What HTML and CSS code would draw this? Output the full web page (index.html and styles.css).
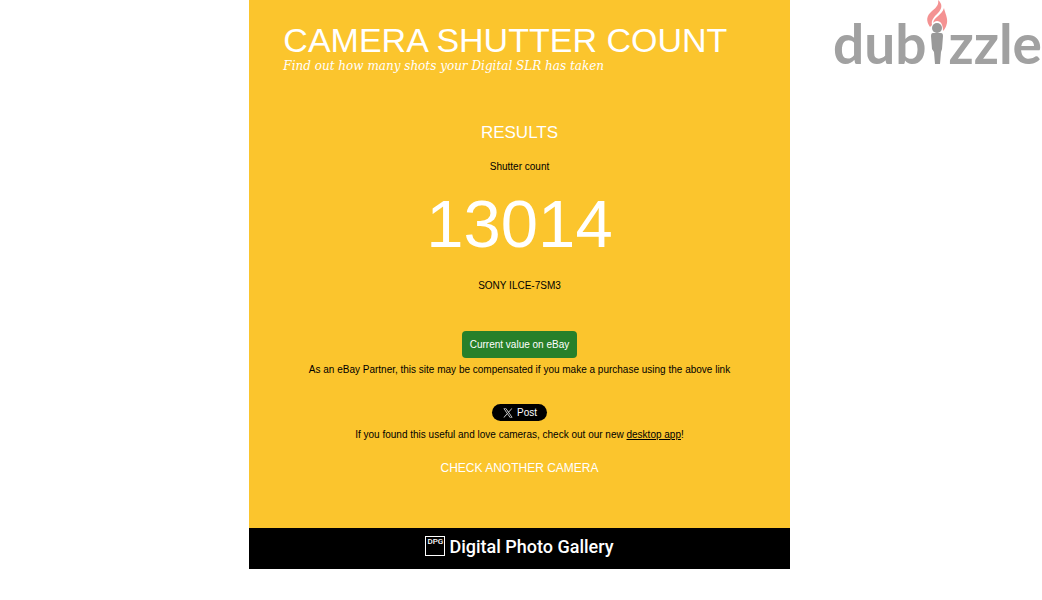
FILE: index.html
```html
<!DOCTYPE html>
<html lang="en">
<head>
  <meta charset="UTF-8">
  <title>Camera Shutter Count</title>
  <link rel="stylesheet" href="styles.css">
</head>
<body>

<!-- Main page column -->
<div class="page">
  <main class="content">
    <header class="header">
      <h1>CAMERA SHUTTER COUNT</h1>
      <p class="tagline">Find out how many shots your Digital SLR has taken</p>
    </header>

    <!-- Result of the upload -->
    <section class="results">
      <h2>RESULTS</h2>
      <p>Shutter count</p>
      <p class="count">13014</p>
      <p>SONY ILCE-7SM3</p>
    </section>

    <section class="links">
      <a class="ebay" href="#">Current value on eBay</a>
      <p>As an eBay Partner, this site may be compensated if you make a purchase using the above link</p>
      <button class="post" type="button">
        <svg class="x-icon" viewBox="0 0 24 24" aria-hidden="true">
          <path d="M14.1 10.3 22.3 1H20.4L13.2 9.1 7.6 1H1L9.6 13.3 1 23H2.9L10.5 14.4 16.4 23H23zM3.7 2.4H6.7L20.4 21.6H17.4z"/>
        </svg>
        Post
      </button>
      <p>If you found this useful and love cameras, check out our new <a href="#">desktop app</a>!</p>
      <a class="again" href="#">CHECK ANOTHER CAMERA</a>
    </section>
  </main>

  <footer class="footer">
    <span class="badge">DPG</span>
    <span class="gallery">Digital Photo Gallery</span>
  </footer>
</div>

<!-- Site watermark -->
<div class="watermark">
  <span>dub</span>
  <svg class="torch" viewBox="0 0 22 66" aria-hidden="true">
    <path class="flame" d="M4 27C0 21 0 16 6 11C11 7 13 4 12 0C17 4 16 9 12 13C8 17 5 20 6 25zM7 23C8 17 16 15 18 8C19 13 22 18 21 23C20 27 19 29 17 31C17 25 15 21 11 21C9 21 8 22 7 23z"/>
    <circle class="body" cx="11" cy="28" r="5"/>
    <path class="body" d="M7 33H15Q17 33 17 36L16 49L15 52L14 64H9L8 52L6 49L5 36Q5 33 7 33z"/>
  </svg>
  <span>zzle</span>
</div>

</body>
</html>
```
FILE: styles.css
```css
/* Whole page */
body {
  margin: 0;
  padding-right: 3px;
  background: #fff;
  color: #000;
  font-family: "Liberation Sans", Arial, sans-serif;
  font-size: 10px;
  line-height: 12px;
}

h1, h2, p {
  margin: 0;
  font-weight: normal;
}

/* Centered column */
.page {
  width: 52%;
  margin: 0 auto;
}

.content {
  background: #fbc52d;
  padding: 22px 34px 52px;
}

h1 {
  color: #fff;
  font-size: 34px;
  line-height: 36px;
}

.tagline {
  color: #fff;
  font-family: "DejaVu Serif", Georgia, serif;
  font-style: italic;
  font-size: 12px;
  line-height: 16px;
}

/* Results */
.results {
  display: flex;
  flex-direction: column;
  align-items: center;
  margin-top: 48px;
}

h2 {
  color: #fff;
  font-size: 17px;
  line-height: 22px;
  margin-bottom: 17px;
}

.count {
  color: #fff;
  font-size: 67px;
  line-height: 76px;
  margin: 13px 0 18px;
}

/* Links under the result */
.links {
  display: flex;
  flex-direction: column;
  align-items: center;
  margin-top: 39px;
  text-align: center;
}

.links a {
  color: #000;
}

.links .ebay {
  background: #27802a;
  color: #fff;
  border-radius: 4px;
  padding: 8px;
  line-height: 11px;
  margin-bottom: 6px;
  text-decoration: none;
}

.post {
  display: flex;
  align-items: center;
  gap: 4px;
  margin: 28px 0 8px;
  padding: 2px 10px 2px 11px;
  border: none;
  border-radius: 9px;
  background: #000;
  color: #fff;
  font-family: inherit;
  font-size: 10px;
  line-height: 13px;
}

.x-icon {
  width: 10px;
  height: 10px;
  fill: #fff;
}

.links .again {
  color: #fff;
  font-size: 12px;
  line-height: 16px;
  margin-top: 19px;
  text-decoration: none;
}

/* Footer bar */
.footer {
  display: flex;
  justify-content: center;
  gap: 4px;
  padding: 4px 0 8px;
  background: #000;
  color: #fff;
  font-family: Roboto, "Liberation Sans", sans-serif;
  font-weight: 500;
}

.badge {
  width: 18px;
  height: 18px;
  margin-top: 4px;
  border: 1px solid #fff;
  font-size: 8px;
  line-height: 10px;
  text-align: center;
}

.gallery {
  font-size: 18px;
  line-height: 29px;
}

/* Watermark in the corner */
.watermark {
  position: absolute;
  top: 0;
  right: 0;
  display: flex;
  color: #a1a1a1;
  font-family: Lato, sans-serif;
  font-weight: bold;
  font-size: 55px;
  line-height: 86px;
}

.torch {
  width: 22px;
  height: 66px;
}

.flame {
  fill: #f49292;
}

.body {
  fill: #999;
}
```
